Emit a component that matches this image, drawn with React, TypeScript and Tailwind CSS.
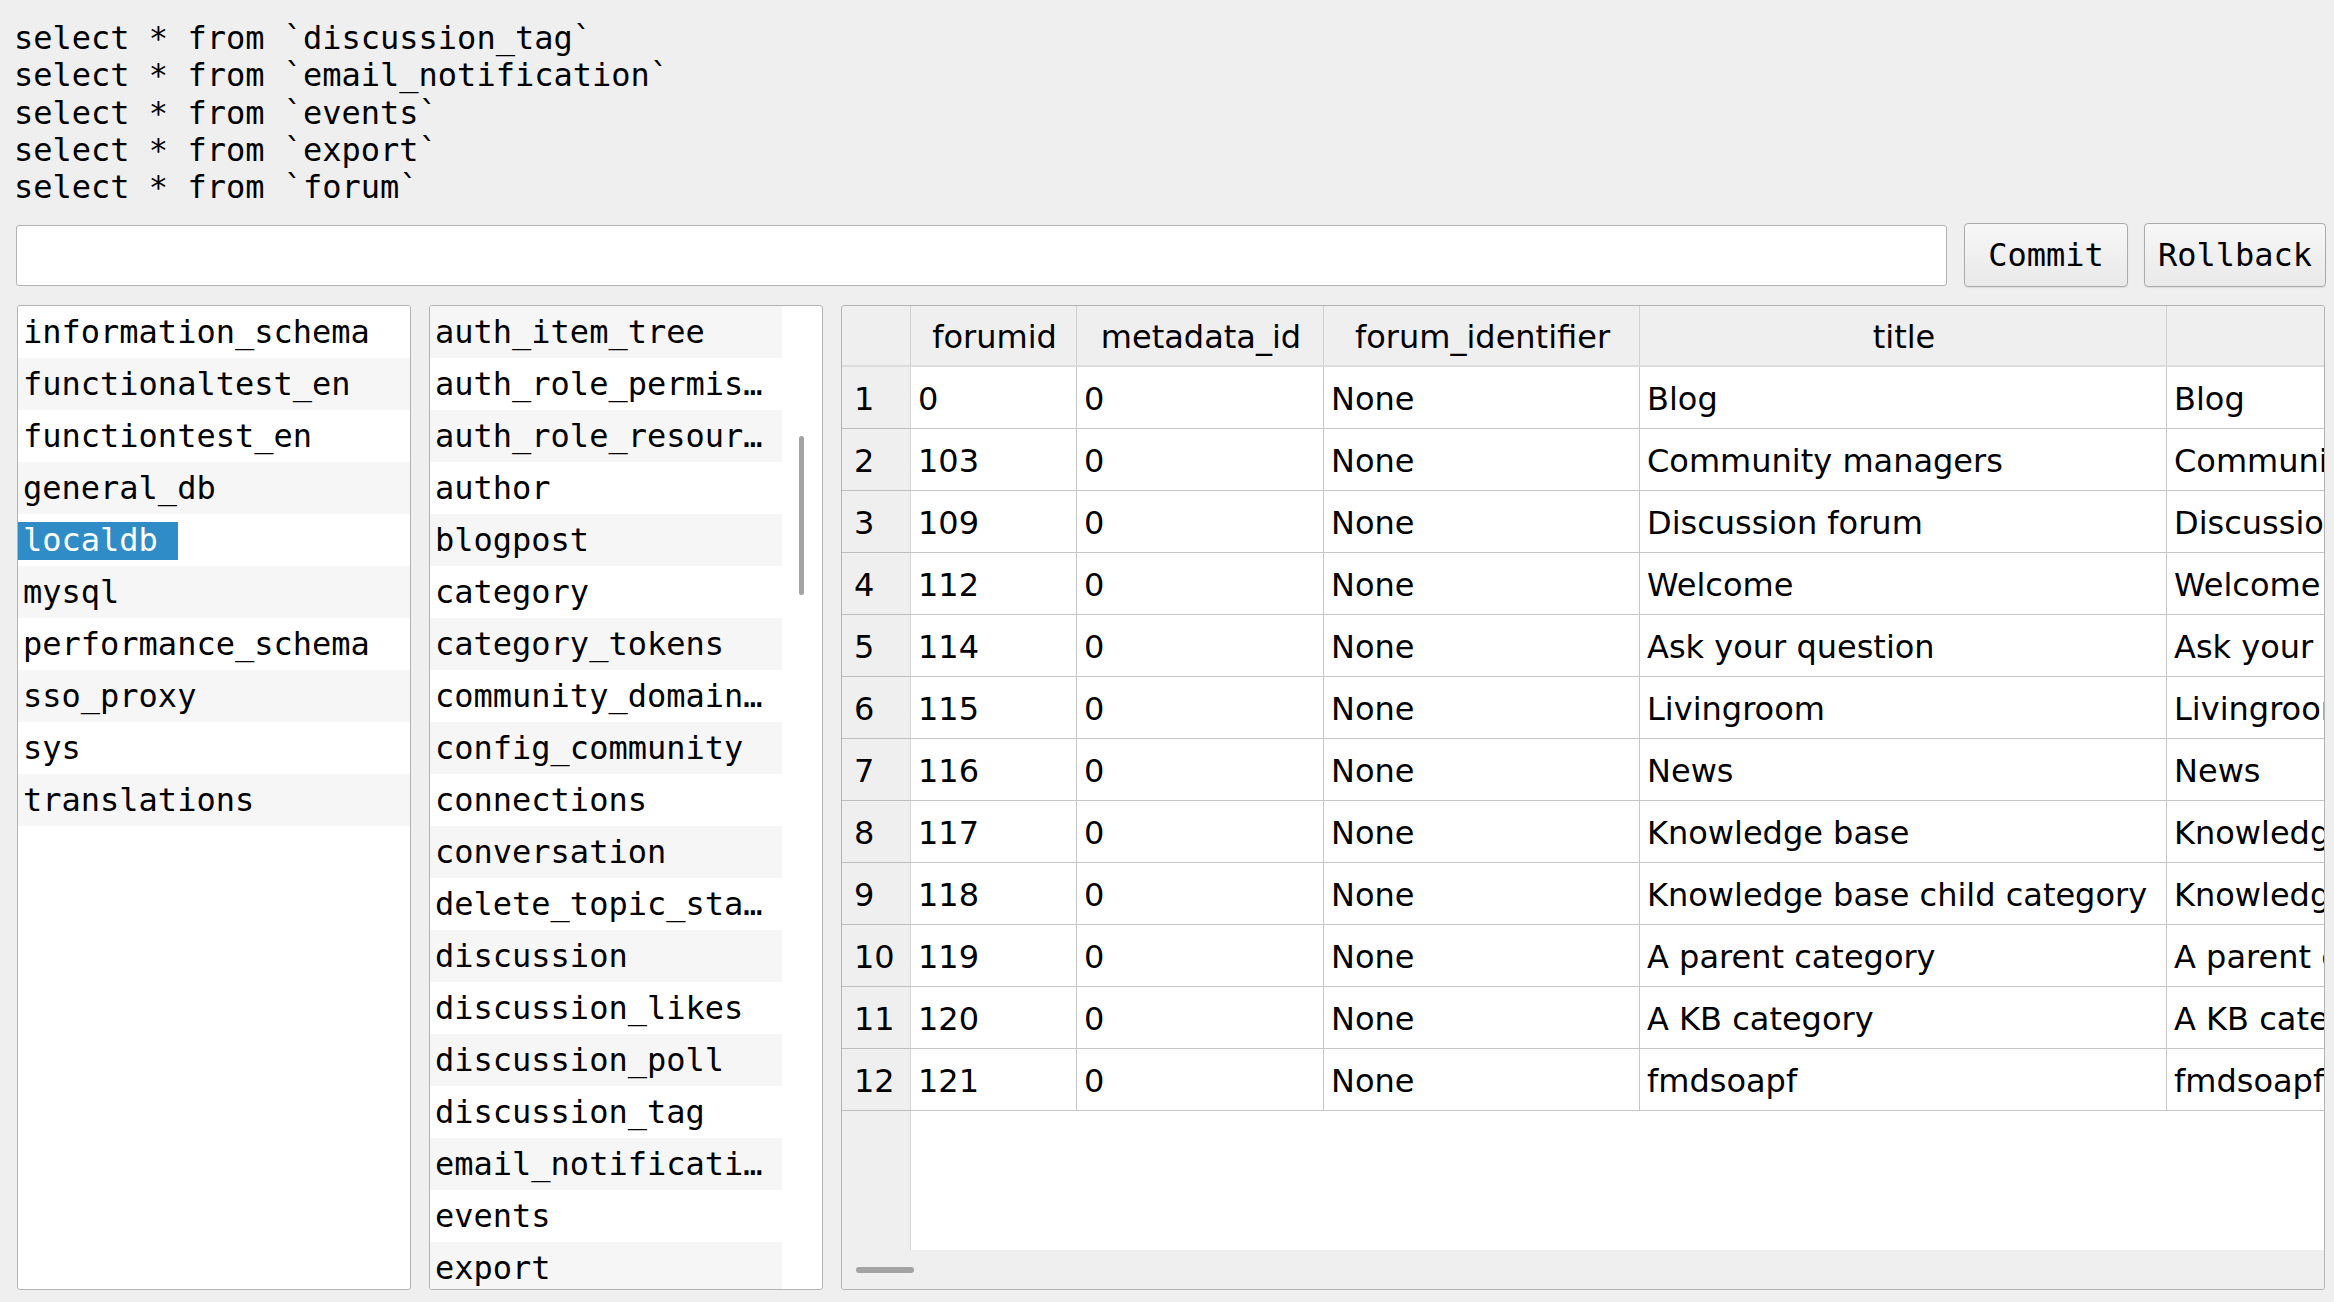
import React from 'react';

const queries = [
  'select * from `discussion_tag`',
  'select * from `email_notification`',
  'select * from `events`',
  'select * from `export`',
  'select * from `forum`',
];

const databases = [
  'information_schema',
  'functionaltest_en',
  'functiontest_en',
  'general_db',
  'localdb',
  'mysql',
  'performance_schema',
  'sso_proxy',
  'sys',
  'translations',
];

const tables = [
  'auth_item_tree',
  'auth_role_permis…',
  'auth_role_resour…',
  'author',
  'blogpost',
  'category',
  'category_tokens',
  'community_domain…',
  'config_community',
  'connections',
  'conversation',
  'delete_topic_sta…',
  'discussion',
  'discussion_likes',
  'discussion_poll',
  'discussion_tag',
  'email_notificati…',
  'events',
  'export',
];

const titles = [
  ['0', 'Blog'],
  ['103', 'Community managers'],
  ['109', 'Discussion forum'],
  ['112', 'Welcome'],
  ['114', 'Ask your question'],
  ['115', 'Livingroom'],
  ['116', 'News'],
  ['117', 'Knowledge base'],
  ['118', 'Knowledge base child category'],
  ['119', 'A parent category'],
  ['120', 'A KB category'],
  ['121', 'fmdsoapf'],
];

const mono = "font-['DejaVu_Sans_Mono','Liberation_Mono',monospace]";
const sans = "font-['DejaVu_Sans','Liberation_Sans',sans-serif]";

const Button = ({ label, width }: { label: string; width: string }) => (
  <button
    className={`${mono} ${width} h-[64px] shrink-0 text-[32px] text-black rounded-[4px] border border-[#ababab] bg-gradient-to-b from-[#f7f7f7] to-[#e9e9e9] shadow-[0_1px_1px_rgba(0,0,0,0.08)]`}
  >
    {label}
  </button>
);

const DatabaseList = () => (
  <div className="w-[394px] h-full shrink-0 bg-white border border-[#b3b3b3] rounded-[3px] overflow-hidden">
    {databases.map((db, i) => (
      <div
        key={db}
        className={`h-[52px] flex items-center pt-[1px] ${i % 2 === 1 ? 'bg-[#f6f6f6]' : 'bg-white'} ${mono} text-[32px] leading-[37px] text-black whitespace-nowrap`}
      >
        {db === 'localdb' ? (
          <span className="w-[160px] h-[38px] flex items-center pl-[5px] bg-[#308cc6] text-white">{db}</span>
        ) : (
          <span className="pl-[5px]">{db}</span>
        )}
      </div>
    ))}
  </div>
);

const TableList = () => (
  <div className="w-[394px] h-full shrink-0 bg-white border border-[#b3b3b3] rounded-[3px] overflow-hidden flex">
    <div className="w-[352px] shrink-0">
      {tables.map((t, i) => (
        <div
          key={t}
          className={`h-[52px] flex items-center pl-[5px] pt-[1px] ${i % 2 === 0 ? 'bg-[#f6f6f6]' : 'bg-white'} ${mono} text-[32px] leading-[37px] text-black whitespace-nowrap overflow-hidden`}
        >
          {t}
        </div>
      ))}
    </div>
    <div className="flex-1 pl-[17px] pt-[130px]">
      <div className="w-[5px] h-[159px] rounded-full bg-[#a3a3a3]" />
    </div>
  </div>
);

const cols = [
  { name: 'forumid', w: 'w-[166px]' },
  { name: 'metadata_id', w: 'w-[247px]' },
  { name: 'forum_identifier', w: 'w-[316px]' },
  { name: 'title', w: 'w-[527px]' },
  { name: '', w: 'w-[330px]' },
];

const ResultTable = () => (
  <div className={`flex-1 h-full bg-[#efefef] border border-[#b3b3b3] rounded-[3px] overflow-hidden flex flex-col ${sans} text-[32px] text-black`}>
    <div className="h-[61px] shrink-0 flex border-b-2 border-[#dcdcdc] bg-[#efefef]">
      <div className="w-[68px] shrink-0" />
      {cols.map((c, i) => (
        <div
          key={i}
          className={`${c.w} shrink-0 flex items-center justify-center pt-[2px] pl-[2px] border-l border-[#d2d2d2] whitespace-nowrap`}
        >
          {c.name}
        </div>
      ))}
    </div>
    <div className="flex-1 flex flex-col">
      {titles.map(([id, title], i) => (
        <div key={id} className="h-[62px] shrink-0 flex">
          <div className="w-[69px] shrink-0 flex items-center pl-[12px] pt-[2px] bg-[#efefef] border-b border-r border-b-[#bdbdbd] border-r-[#d6d6d6]">
            {i + 1}
          </div>
          {[id, '0', 'None', title, title].map((v, j) => (
            <div
              key={j}
              className={`${j === 4 ? 'w-[330px]' : cols[j].w} shrink-0 flex items-center pl-[7px] pt-[2px] bg-white border-b border-r border-[#c6c6c6] whitespace-nowrap overflow-hidden`}
            >
              {v}
            </div>
          ))}
        </div>
      ))}
      <div className="flex-1 flex">
        <div className="w-[69px] shrink-0 bg-[#efefef] border-r border-[#d6d6d6]" />
        <div className="flex-1 bg-white" />
      </div>
    </div>
    <div className="h-[39px] shrink-0 bg-[#efefef] pl-[14px] pt-[17px]">
      <div className="w-[58px] h-[6px] rounded-full bg-[#a3a3a3]" />
    </div>
  </div>
);

export default function App() {
  return (
    <div className="w-[2334px] h-[1302px] bg-[#efefef] flex flex-col overflow-hidden">
      <div className={`h-[223px] shrink-0 pt-[20px] pl-[14px] ${mono} text-[32px] leading-[37.25px] text-black whitespace-pre`}>
        {queries.map(q => (
          <div key={q}>{q}</div>
        ))}
      </div>
      <div className="h-[64px] shrink-0 flex items-center pl-[16px] pr-[8px]">
        <input className={`flex-1 h-[61px] bg-white border border-[#b3b3b3] rounded-[3px] outline-none px-2 ${mono} text-[32px]`} />
        <div className="ml-[17px]">
          <Button label="Commit" width="w-[164px]" />
        </div>
        <div className="ml-[16px]">
          <Button label="Rollback" width="w-[182px]" />
        </div>
      </div>
      <div className="h-[985px] mt-[18px] shrink-0 flex gap-[18px] pl-[17px] pr-[9px]">
        <DatabaseList />
        <TableList />
        <ResultTable />
      </div>
    </div>
  );
}
